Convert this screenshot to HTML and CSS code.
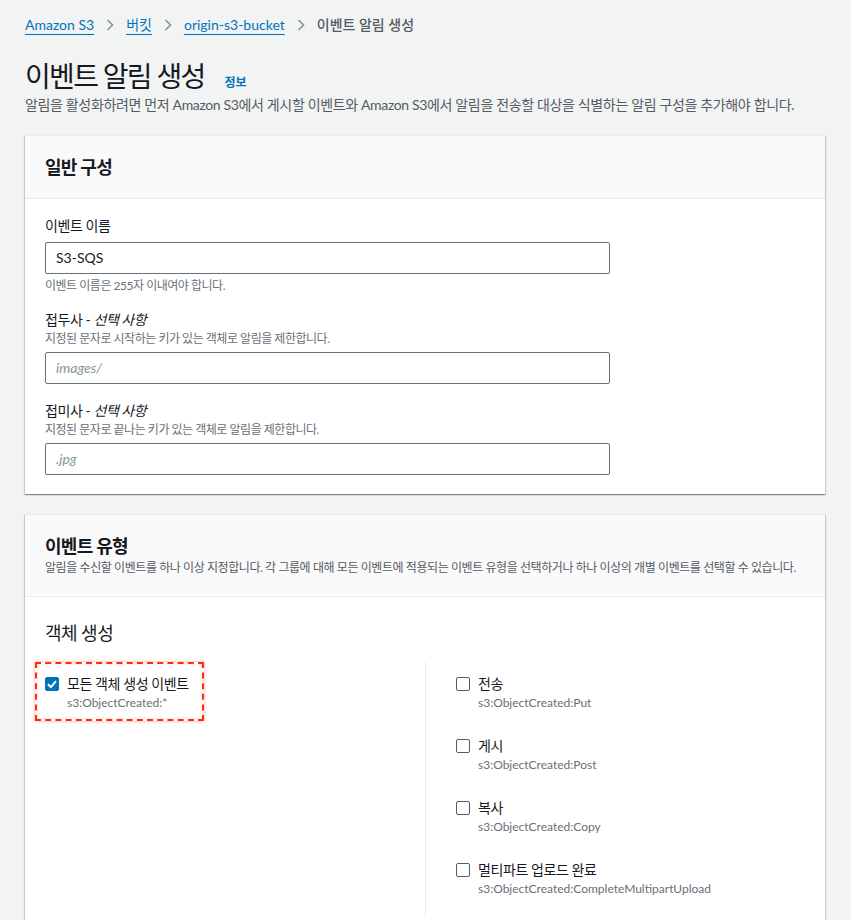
FILE: index.html
```html
<!DOCTYPE html>
<html lang="ko">
<head>
<meta charset="utf-8">
<title>이벤트 알림 생성</title>
<link rel="stylesheet" href="styles.css">
</head>
<body>
<nav class="crumbs">
  <a class="crumb-link" href="#">Amazon S3</a>
  <svg class="chev" width="8" height="12" viewBox="0 0 8 12"><path d="M1.5 1 L6.5 6 L1.5 11" fill="none" stroke="#879596" stroke-width="1.6"/></svg>
  <a class="crumb-link" href="#">버킷</a>
  <svg class="chev" width="8" height="12" viewBox="0 0 8 12"><path d="M1.5 1 L6.5 6 L1.5 11" fill="none" stroke="#879596" stroke-width="1.6"/></svg>
  <a class="crumb-link" href="#">origin-s3-bucket</a>
  <svg class="chev" width="8" height="12" viewBox="0 0 8 12"><path d="M1.5 1 L6.5 6 L1.5 11" fill="none" stroke="#879596" stroke-width="1.6"/></svg>
  <span class="crumb-current">이벤트 알림 생성</span>
</nav>

<header class="page-head">
  <div class="title-row">
    <h1 class="page-title">이벤트 알림 생성</h1>
    <a class="info-link" href="#">정보</a>
  </div>
  <p class="page-desc">알림을 활성화하려면 먼저 Amazon S3에서 게시할 이벤트와 Amazon S3에서 알림을 전송할 대상을 식별하는 알림 구성을 추가해야 합니다.</p>
</header>

<section class="card">
  <div class="card-head">
    <h2 class="card-title">일반 구성</h2>
  </div>
  <div class="card-body form-body">
    <div class="field">
      <label class="field-label">이벤트 이름</label>
      <div class="input">S3-SQS</div>
      <div class="hint hint-after">이벤트 이름은 255자 이내여야 합니다.</div>
    </div>
    <div class="field">
      <label class="field-label">접두사 - <i>선택 사항</i></label>
      <div class="hint">지정된 문자로 시작하는 키가 있는 객체로 알림을 제한합니다.</div>
      <div class="input placeholder">images/</div>
    </div>
    <div class="field">
      <label class="field-label">접미사 - <i>선택 사항</i></label>
      <div class="hint">지정된 문자로 끝나는 키가 있는 객체로 알림을 제한합니다.</div>
      <div class="input placeholder">.jpg</div>
    </div>
  </div>
</section>

<section class="card">
  <div class="card-head">
    <h2 class="card-title">이벤트 유형</h2>
    <p class="card-desc">알림을 수신할 이벤트를 하나 이상 지정합니다. 각 그룹에 대해 모든 이벤트에 적용되는 이벤트 유형을 선택하거나 하나 이상의 개별 이벤트를 선택할 수 있습니다.</p>
  </div>
  <div class="card-body">
    <h3 class="group-title">객체 생성</h3>
    <div class="cols">
      <div class="col">
        <div class="check-item highlighted">
          <span class="box checked"><svg width="14" height="14" viewBox="0 0 14 14"><path d="M3 7.3 L5.9 10.1 L11 4.2" fill="none" stroke="#fff" stroke-width="2"/></svg></span>
          <div class="check-text">
            <div class="check-label">모든 객체 생성 이벤트</div>
            <div class="check-desc">s3:ObjectCreated:*</div>
          </div>
          <span class="annot"></span>
        </div>
      </div>
      <div class="col col-right">
        <div class="check-item">
          <span class="box"></span>
          <div class="check-text">
            <div class="check-label">전송</div>
            <div class="check-desc">s3:ObjectCreated:Put</div>
          </div>
        </div>
        <div class="check-item">
          <span class="box"></span>
          <div class="check-text">
            <div class="check-label">게시</div>
            <div class="check-desc">s3:ObjectCreated:Post</div>
          </div>
        </div>
        <div class="check-item">
          <span class="box"></span>
          <div class="check-text">
            <div class="check-label">복사</div>
            <div class="check-desc">s3:ObjectCreated:Copy</div>
          </div>
        </div>
        <div class="check-item">
          <span class="box"></span>
          <div class="check-text">
            <div class="check-label">멀티파트 업로드 완료</div>
            <div class="check-desc">s3:ObjectCreated:CompleteMultipartUpload</div>
          </div>
        </div>
      </div>
    </div>
  </div>
</section>
</body>
</html>
```
FILE: styles.css
```css
* { box-sizing: border-box; }
html, body { margin: 0; padding: 0; }
body {
  background: #f2f3f3;
  color: #16191f;
  font-family: Lato, "Noto Sans CJK KR", sans-serif;
  font-size: 14px;
  line-height: 22px;
  padding: 14px 26px 40px 25px;
}
.crumbs {
  display: flex;
  align-items: center;
  gap: 12px;
  height: 22px;
  font-size: 14px;
}
.crumb-link {
  color: #0073bb;
  text-decoration: underline;
  text-underline-offset: 4px;
  text-decoration-thickness: 1px;
}
.chev { display: block; }
.crumb-current { color: #545b64; font-weight: 500; }

.page-head { margin-top: 22px; }
.title-row { display: flex; align-items: baseline; gap: 20px; }
.page-title {
  margin: 0;
  font-size: 28px;
  line-height: 36px;
  font-weight: 400;
  letter-spacing: -0.06em;
}
.info-link {
  color: #0073bb;
  font-size: 12px;
  font-weight: 700;
  text-decoration: none;
}
.page-desc {
  margin: 1px 0 0;
  color: #545b64;
  font-size: 14px;
  line-height: 20px;
  letter-spacing: -0.025em;
}

.card {
  background: #fff;
  margin-top: 20px;
  border-top: 1px solid #eaeded;
  box-shadow: 0 1px 1px 0 rgba(0,28,36,.3), 1px 1px 1px 0 rgba(0,28,36,.15), -1px 1px 1px 0 rgba(0,28,36,.15);
}
.card + .card { margin-top: 20px; }
.card-head {
  background: #fafafa;
  border-bottom: 1px solid #eaeded;
  padding: 20px 20px 20px;
}
.card-title {
  margin: 0;
  font-size: 18px;
  line-height: 22px;
  font-weight: 700;
  letter-spacing: -0.04em;
}
.card-desc {
  margin: 0;
  color: #545b64;
  font-size: 12px;
  line-height: 16px;
  padding-top: 3px;
  letter-spacing: -0.035em;
}
.card-body { padding: 16px 20px 20px; }

.form-body { display: flex; flex-direction: column; gap: 15px; padding-bottom: 19px; }
.field { display: flex; flex-direction: column; width: 565px; }
.field + .field + .field { margin-top: 1px; }
.field-label { font-size: 14px; line-height: 22px; letter-spacing: -0.03em; }
.field-label i { font-style: italic; }
.hint {
  color: #687078;
  font-size: 12px;
  line-height: 16px;
  letter-spacing: -0.04em;
}
.hint-after { margin-top: 4px; }
.input {
  height: 32px;
  border: 1px solid #687078;
  border-radius: 2px;
  padding: 4px 10px;
  font-size: 14px;
  line-height: 22px;
  margin-top: 5px;
  color: #16191f;
}
.field .hint + .input { margin-top: 5px; }
.input.placeholder { color: #879596; font-style: italic; }

.group-title {
  margin: 9px 0 0;
  font-size: 18px;
  line-height: 22px;
  font-weight: 400;
  letter-spacing: -0.03em;
}
.cols {
  display: grid;
  grid-template-columns: 380px 380px;
  margin-top: 18px;
}
.col { padding: 11px 0 21px; display: flex; flex-direction: column; gap: 24px; }
.col-right { border-left: 1px solid #eaeded; padding-left: 30px; }
.check-item { display: flex; gap: 8px; position: relative; align-self: flex-start; }
.box {
  flex: none;
  width: 14px;
  height: 14px;
  margin-top: 4px;
  border: 1.5px solid #545b64;
  border-radius: 2px;
  background: #fff;
  display: block;
}
.box.checked { background: #0073bb; border-color: #0073bb; position: relative; }
.box.checked svg { position: absolute; left: -1.5px; top: -1.5px; }
.check-label { font-size: 14px; line-height: 22px; letter-spacing: -0.03em; }
.check-desc { color: #687078; font-size: 12px; line-height: 16px; }
.annot {
  position: absolute;
  left: -10px;
  top: -11px;
  width: 169px;
  height: 59px;
  border: 2px dashed #ff2a10;
  box-shadow: 0 0 3px rgba(255,40,0,.45), inset 0 0 2px rgba(255,40,0,.3);
  pointer-events: none;
}
```
